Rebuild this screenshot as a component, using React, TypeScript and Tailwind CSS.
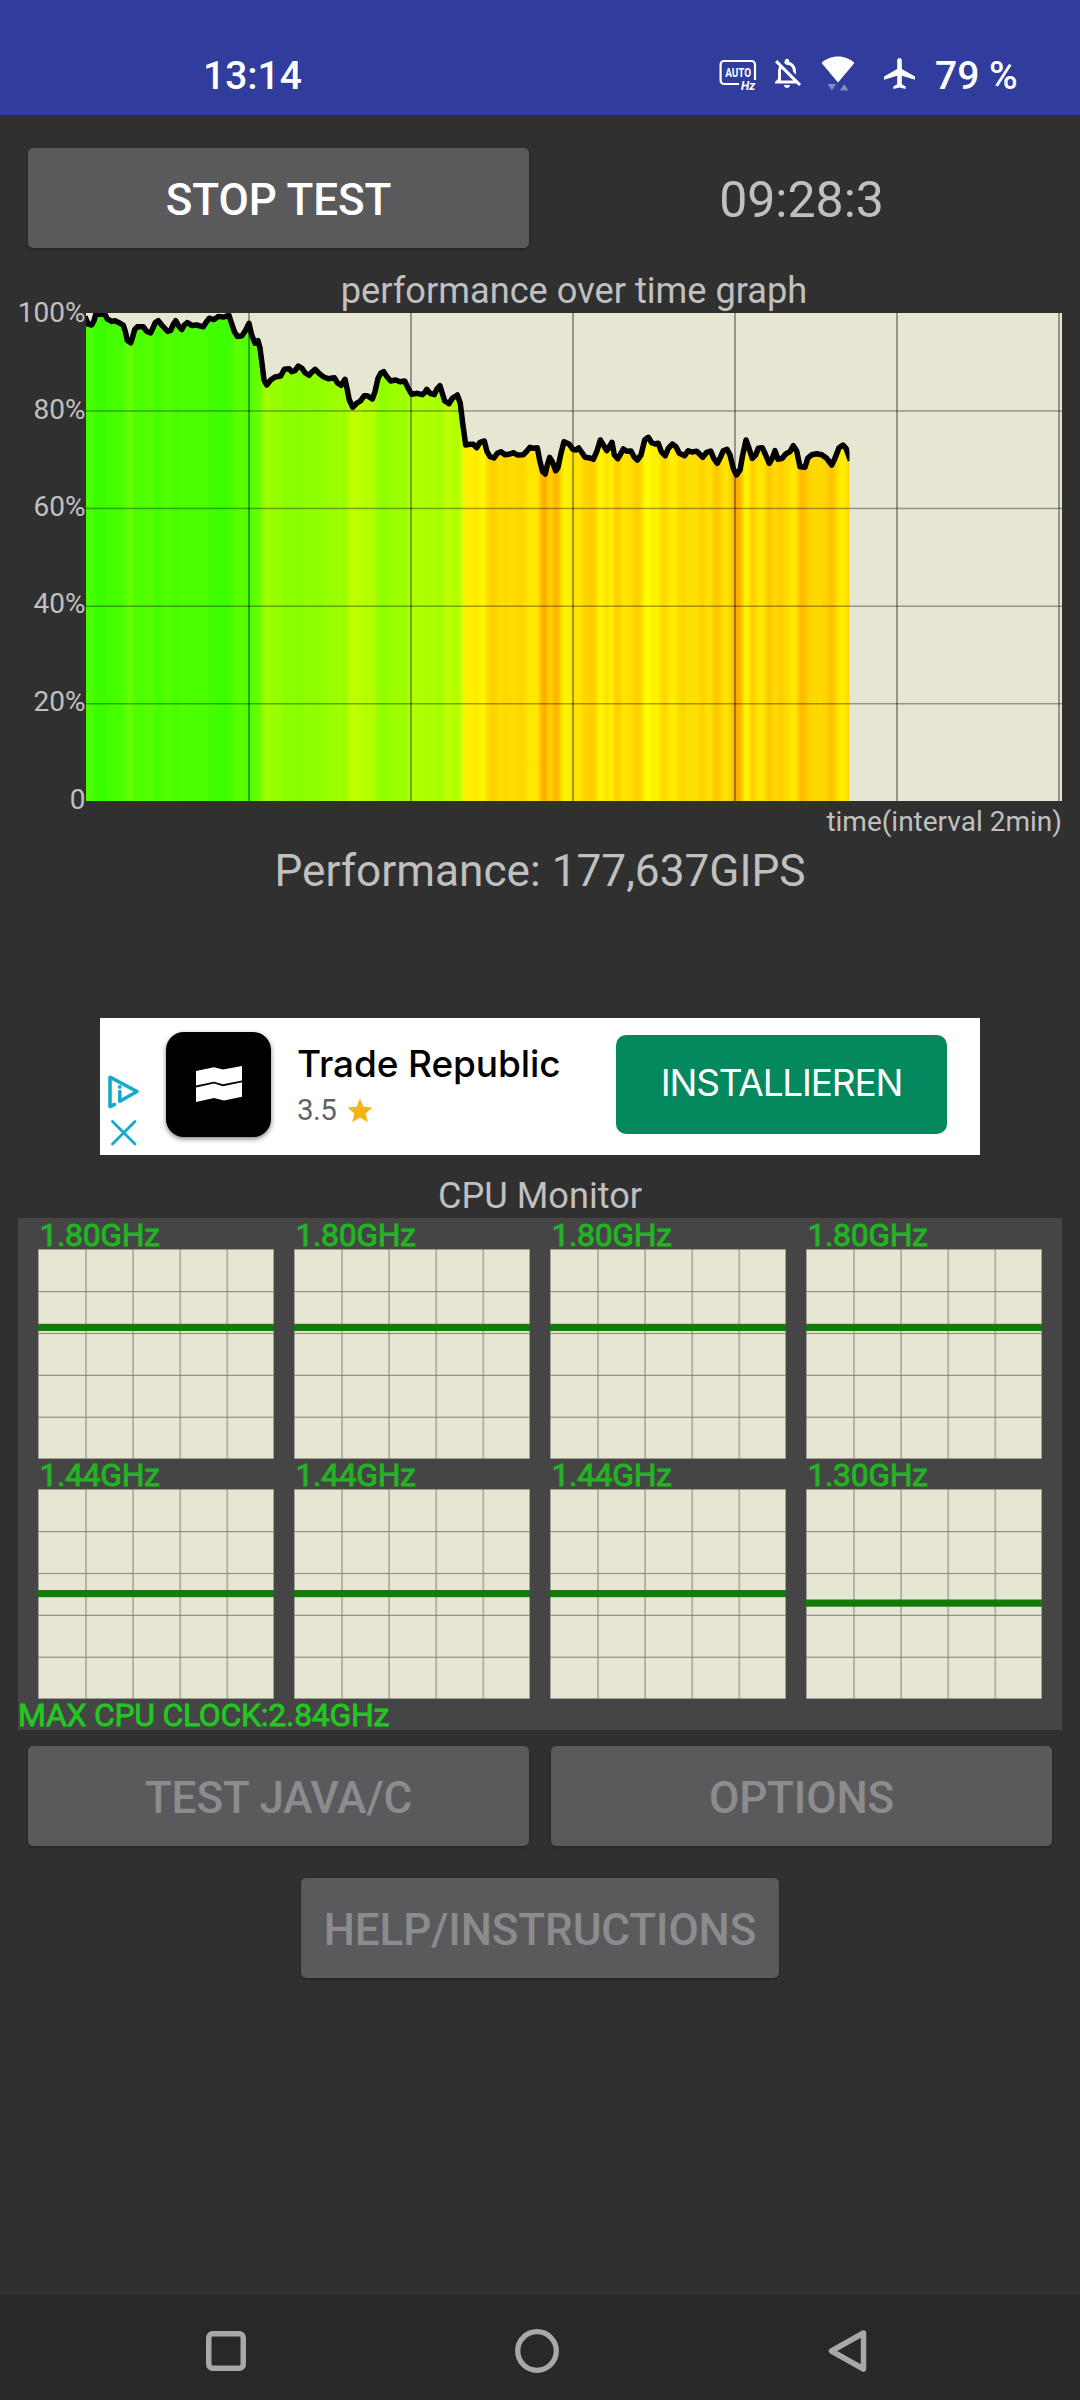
import React from 'react';
import { MdAirplanemodeActive, MdOutlineNotificationsOff, MdStar } from 'react-icons/md';
import { clsx } from 'clsx';

// trace of the run: x, y pairs inside the 976x488 plot area
const TRACE = `
0,6 2,11 5.7,12 8,7.7 9.7,1.6 14,1.3 19,1.3 21.3,6 25.7,8.4 29,7.7 34,10.2 37.3,12.4 39.3,18.4 41.3,27.4
44.7,29.9 46.7,23.8 48.7,16.6 51.3,13.8 57.3,13.8 60.7,18.4 64.7,19.9 67.3,14.1 69.3,9.5 72.3,7.7 75.7,12
79,15.6 81.7,18.4 84.7,17.4 87.3,11.3 89.7,7.7 92.7,13 95.7,16.6 98.3,12 101.3,9.5 105.7,12.4 110.7,12
117.3,13.8 120,9.5 123.3,5.2 128,6.6 132.3,3.4 137.3,4.1 143,2.4 145.3,9.5 148.3,18.4 151.3,23.4 155.7,23
159,18.4 163,10.3 165.7,22 169,30.3 172,27.7 174,35.3 176,50.3 178,67 180.7,72 184.7,67 189,64 194.7,63
198.3,56.3 203,55.7 205.7,58.7 209,57.7 212.3,53 216,55.3 219,59.7 223,62.3 226.3,58.7 229,56.3 233,60.3
237.3,63.7 242.3,65.7 248.3,64.7 251.3,69.7 255,72.3 259,66.3 261,75.3 263.3,87 266.7,94.3 270.7,90.3
274.7,87.7 278.3,82.7 281.3,82.7 286.3,86 289,78.7 292,65.3 294.7,60.3 297.7,58.7 301,63.7 304.7,68
309.7,67 314,68.7 318.7,68 321.7,74.3 325.7,81.3 331.3,80.3 336.3,81.7 338.7,79.7 340.7,76.3 344,80.3
348.3,81.7 350.7,76.3 354,72.7 356.3,80.3 358.7,88 363,90.7 366.3,85.3 371.3,82 374.3,90.3 376.7,110.3
379.7,132 384,131.3 387.3,131.3 390.7,134.7 394,129.3 398.3,128 401,138.7 404,143.7 408,145 411.3,140.3
415,138.7 419,141.7 424,141 427.7,139.7 431.3,142 437.3,141.7 440.7,138.3 444,134.3 447.3,135.3 451.3,134.7
454,148.7 456.7,158.7 459.3,161 461.3,152 463.7,144.3 466.3,148.7 469.7,157.7 471.7,155.3 475,140.3
478,128.7 483.3,131.3 486.7,136.3 490,137 492.7,135 495.7,139.3 499,144.3 504,145 507.3,146.3 510.7,138.7
514.3,127 517.3,132 520.7,137.7 523.3,133.7 526,129.3 528.3,142 531.7,145.7 535,140.3 537.3,136 540.7,138.3
545,138 548,143.7 551.3,147 555,142 558.7,127 562.3,124.3 565.7,129.7 569,131 572.3,130.3 575.3,138.7
579.3,142.7 582.3,135.3 586.3,131 590,133.7 593.3,140.3 598.7,142.7 602.3,137.7 605.7,139 610.7,138.3
616.7,144.3 620.7,139.3 624.7,138 627.7,145.3 631.3,150.3 634.7,143.7 637.3,137.7 641,136.3 644,142
647.3,155.3 650.3,162 654,157 656.7,142 660,127 663,135.3 666.3,145.3 669.7,142 672.3,135.3 676.3,134.7
679.7,142 683.3,150.3 686.7,144.3 689,137.7 692,146.3 696.3,145.3 699.7,141 704,138.7 707.3,132.7 710.7,138
714,153.7 719,154.3 721.7,145.3 725.7,141.7 730.7,140.7 735.7,141.7 740.7,145.3 745.7,152 749,145.3
753,134.7 757,132 760,135.3 763.5,145`;

const points = TRACE.trim().split(/\s+/).map(p => p.split(',').map(Number));
const PLOT_W = 976;
const PLOT_H = 488;
const END_X = 763.5;

// green at full speed, yellow around 75%, orange when throttled hard
function heat(y: number) {
  const pct = 100 - (y / PLOT_H) * 100;
  let r = 255;
  let g = 255;
  if (pct > 80) r = 57 + 7.1 * (100 - pct);
  else if (pct > 75) r = 200 + 11 * (80 - pct);
  else g = 255 - (74.5 - pct) * 11;
  return `rgb(${Math.round(Math.min(255, r))},${Math.round(Math.min(255, g))},0)`;
}

const Y_LABELS = [
  { text: '100%', y: 9 },
  { text: '80%', y: 106 },
  { text: '60%', y: 203 },
  { text: '40%', y: 300 },
  { text: '20%', y: 398 },
  { text: '0', y: 496 },
];

function PerformanceGraph() {
  const line = points.map(p => p.join(',')).join(' ');
  return (
    <svg className="block overflow-visible" width={1062} height={PLOT_H} viewBox="-86 0 1062 488">
      <defs>
        <linearGradient id="heat" gradientUnits="userSpaceOnUse" x1="0" y1="0" x2={END_X} y2="0">
          {points.map(([x, y]) => (
            <stop key={x} offset={x / END_X} stopColor={heat(y)} />
          ))}
        </linearGradient>
        <clipPath id="plot">
          <rect width={END_X} height={PLOT_H} />
        </clipPath>
      </defs>
      <rect width={PLOT_W} height={PLOT_H} fill="#e6e6d2" />
      <g clipPath="url(#plot)">
        <polygon points={`0,488 ${line} ${END_X},488`} fill="url(#heat)" />
        <polyline points={line} fill="none" stroke="#000" strokeWidth="5.5" strokeLinejoin="round" strokeLinecap="square" />
      </g>
      {[98, 195.5, 293.3, 390.8].map(y => (
        <rect key={y} y={y - 0.8} width={PLOT_W} height="1.5" fill="#000" fillOpacity="0.35" />
      ))}
      {[163, 325, 487, 649, 811, 973].map(x => (
        <rect key={x} x={x - 1} width="2" height={PLOT_H} fill="#000" fillOpacity="0.35" />
      ))}
      {Y_LABELS.map(l => (
        <text key={l.text} x="-0.5" y={l.y} textAnchor="end" fontSize="28" fill="#c0c0c0">{l.text}</text>
      ))}
    </svg>
  );
}

const CORES = [
  { clock: '1.80GHz', y: 78.3 },
  { clock: '1.80GHz', y: 78.3 },
  { clock: '1.80GHz', y: 78.3 },
  { clock: '1.80GHz', y: 78.3 },
  { clock: '1.44GHz', y: 104.5 },
  { clock: '1.44GHz', y: 104.5 },
  { clock: '1.44GHz', y: 104.5 },
  { clock: '1.30GHz', y: 114 },
];

function Core({ clock, y }: { clock: string; y: number }) {
  return (
    <div>
      <div className="h-[30px] pl-[1.5px] leading-[33px] text-[32px] tracking-[-0.4px] text-[#22b422] [-webkit-text-stroke:1px_#22b422]">{clock}</div>
      <svg className="block" width="236" height="210" viewBox="0 0 236 210">
        <rect width="236" height="210" fill="#e6e6d2" />
        <g fill="#808080" fillOpacity="0.55">
          {[1, 2, 3, 4].map(i => <rect key={i} x={i * 47.1} width="1.8" height="210" />)}
        </g>
        <g fill="#808080" fillOpacity="0.85">
          {[1, 2, 3, 4].map(i => <rect key={i} y={i * 41.9 + 0.1} width="236" height="1.2" />)}
        </g>
        <rect x="0.5" y="0.5" width="235" height="209" fill="none" stroke="#808080" strokeOpacity="0.7" />
        <rect y={y - 3.5} width="236" height="7.2" fill="#147a0a" />
      </svg>
    </div>
  );
}

function Button({ children, disabled, className }: { children: React.ReactNode; disabled?: boolean; className?: string }) {
  return (
    <button
      disabled={disabled}
      className={clsx(
        'h-[100px] pt-1 rounded-[5px] bg-[#5a5a5c] font-medium text-[44px] leading-none tracking-[-0.1px] shadow-[0_1px_3px_rgba(0,0,0,0.35)]',
        disabled ? 'text-[#8c8c8e]' : 'text-white',
        className
      )}
    >
      {children}
    </button>
  );
}

function StatusBar() {
  return (
    <header className="h-[115px] bg-[#303d9c] flex items-start pt-[52px] text-white">
      <span className="w-[516px] ml-[203px] pt-px text-[39px] leading-[46px] font-medium">13:14</span>
      <svg className="mt-[7px] overflow-visible" width="38" height="33" viewBox="0 0 38 33" fill="none">
        <path d="M20 25H5a3.4 3.4 0 0 1-3.4-3.4V5.4A3.4 3.4 0 0 1 5 2h27.6A3.4 3.4 0 0 1 36 5.400V21" stroke="#fff" strokeWidth="2.2" />
        <text x="6.200" y="17.800" fontSize="13" fontWeight="700" fill="#fff" textLength="26" lengthAdjust="spacingAndGlyphs">AUTO</text>
        <text x="22" y="30.500" fontSize="12" fontWeight="700" fontStyle="italic" fill="#fff">Hz</text>
      </svg>
      <MdOutlineNotificationsOff className="ml-[12px] mt-[3px]" size={36} />
      <svg className="ml-[16px] mt-[3px]" width="34" height="37" viewBox="0 0 34 37" fill="#fff">
        <path d="M17 1.500C10.500 1.500 4.500 4 .6 8L17 27.500 33.400 8C29.500 4 23.500 1.500 17 1.500z" />
        <path d="M6.500 29h8.500l-4.200 6.500zM19 35.500h8.500L23.200 29z" opacity="0.4" />
      </svg>
      <MdAirplanemodeActive className="ml-[26px] mt-[3px]" size={37} />
      <span className="ml-[17px] pt-px text-[39px] leading-[46px] font-medium">79 %</span>
    </header>
  );
}

function AdBanner() {
  return (
    <div className="mt-[121px] mx-auto w-[880px] h-[137px] bg-white flex items-start">
      <div className="ml-[7px] mt-[56px] w-[33px]">
        <svg width="33" height="36" viewBox="0 0 33 36" fill="none" stroke="#14aacb" strokeWidth="3.600" strokeLinecap="round" strokeLinejoin="round">
          <path d="M7.500 30.500L3 32.500V3.200L30 17.500 12.800 27.200V17.500" />
          <circle cx="12.800" cy="13" r="1.900" fill="#14aacb" stroke="none" />
        </svg>
        <svg className="ml-[3px] mt-[9px]" width="27" height="27" viewBox="0 0 27 27" stroke="#14aacb" strokeWidth="2.800" strokeLinecap="round">
          <path d="M2.500 2.500l22.500 22.500M25 2.500L2.500 25" />
        </svg>
      </div>
      <div className="ml-[26px] mt-[14px] size-[105px] rounded-[18px] bg-black shadow-[0_2px_5px_rgba(0,0,0,0.5)] flex items-center justify-center">
        <svg width="46" height="37" viewBox="0 0 46 37" fill="#fff">
          <path d="M0 5L18 1.200 27 3.600 46 0V14.500L27 18.300 18 15.700 0 19.500z" />
          <path d="M0 21.500L18 17.500 27 20.200 46 16.300V30.700L28 34.500 18 32 0 36z" />
        </svg>
      </div>
      <div className="ml-[26px] mt-[22px] w-[319px]">
        <p className="font-['Inter'] font-medium text-[37px] leading-[48px] tracking-[-0.1px] text-black">Trade Republic</p>
        <div className="flex items-center mt-[4px]">
          <span className="text-[29.5px] leading-[37px] tracking-[-0.6px] text-[#5f6368]">3.5</span>
          <MdStar className="ml-[9px]" size={30} color="#f5b50a" />
        </div>
      </div>
      <div className="mt-[17px] w-[331px] h-[99px] pb-[3px] rounded-[10px] bg-[#04895f] flex items-center justify-center font-['Inter'] text-[37px] tracking-[-1.2px] text-white">
        INSTALLIEREN
      </div>
    </div>
  );
}

function NavBar() {
  return (
    <nav className="h-[105px] bg-[#282828] flex items-center pt-[7px]">
      <svg className="ml-[206px]" width="40" height="40" viewBox="0 0 40 40" fill="none" stroke="#a8a8a8" strokeWidth="5.500">
        <rect x="2.750" y="2.750" width="34.500" height="34.500" rx="4" />
      </svg>
      <svg className="ml-[269px]" width="44" height="44" viewBox="0 0 44 44" fill="none" stroke="#a8a8a8" strokeWidth="5.300">
        <circle cx="22" cy="22" r="19.300" />
      </svg>
      <svg className="ml-[269px]" width="39" height="44" viewBox="0 0 39 44" fill="none" stroke="#a8a8a8" strokeWidth="5.500" strokeLinejoin="round">
        <path d="M35.500 4L3.500 22l32 18z" />
      </svg>
    </nav>
  );
}

export default function App() {
  return (
    <div className="w-[1080px] h-[2400px] bg-[#303030] flex flex-col font-['Roboto',sans-serif] text-[#c0c0c0]">
      <StatusBar />
      <main className="flex-1">
        <div className="grid grid-cols-2 gap-[22px] px-[28px] pt-[33px]">
          <Button>STOP TEST</Button>
          <div className="flex items-center justify-center text-[50px] leading-none pt-[3px]">09:28:3</div>
        </div>

        {/* Throttling graph */}
        <h2 className="mt-[22px] ml-[86px] w-[976px] h-[43px] text-center text-[36.2px] leading-[42px]">performance over time graph</h2>
        <PerformanceGraph />
        <p className="mt-[4px] mr-[18px] text-right text-[28px] leading-[33px]">time(interval 2min)</p>
        <p className="mt-[7px] text-center text-[44.2px] leading-[52px]">Performance: 177,637GIPS</p>

        <AdBanner />

        {/* Per-core clocks */}
        <h2 className="mt-[19px] h-[44px] text-center text-[36.2px] leading-[43px]">CPU Monitor</h2>
        <section className="mx-[18px] h-[512px] pt-px bg-[#454545]">
          <div className="grid grid-cols-4 gap-x-5 px-5">
            {CORES.map((core, i) => <Core key={i} {...core} />)}
          </div>
          <p className="h-[31px] leading-[33px] text-[32px] tracking-[-0.3px] text-[#22c822] [-webkit-text-stroke:0.8px_#22c822]">MAX CPU CLOCK:2.84GHz</p>
        </section>

        <div className="grid grid-cols-2 gap-[22px] px-[28px] mt-[16px]">
          <Button disabled>TEST JAVA/C</Button>
          <Button disabled>OPTIONS</Button>
        </div>
        <div className="mt-[32px] flex justify-center">
          <Button disabled className="w-[478px]">HELP/INSTRUCTIONS</Button>
        </div>
      </main>
      <NavBar />
    </div>
  );
}
